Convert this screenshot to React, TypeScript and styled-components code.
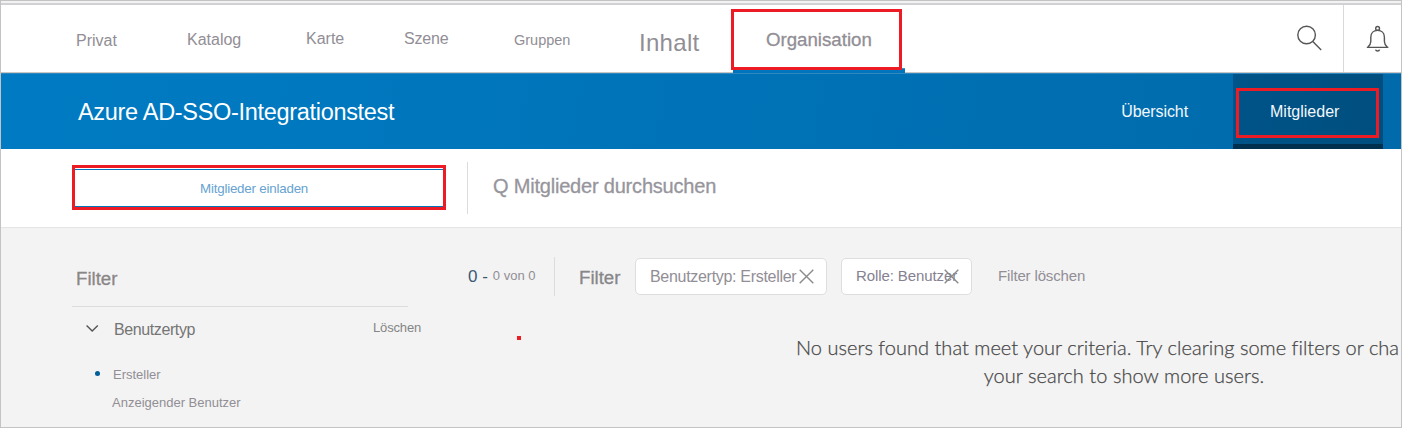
import React from "react";
import styled, { createGlobalStyle } from "styled-components";

const GlobalStyle = createGlobalStyle`
  * { box-sizing: border-box; }
  body { margin: 0; background: #fff; font-family: "Liberation Sans", Arial, sans-serif; }
`;

const RED = "#ed1c24";

const Frame = styled.div`
  width: 1402px;
  height: 428px;
  overflow: hidden;
  border: 1px solid #c3c3c3;
  background: #fff;
  display: flex;
  flex-direction: column;
`;

const TopStrip = styled.div`
  height: 4px;
  flex: none;
  background: #f3f2f3;
  border-bottom: 2px solid #d1d0d2;
`;

/* $baseline is the distance from the top of the container to the text baseline. */
const Label = styled.span<{
  $size: number;
  $baseline: number;
  $color?: string;
  $spacing?: number;
  $heavy?: number;
  $left?: number;
}>`
  display: block;
  flex: none;
  white-space: nowrap;
  line-height: 20px;
  font-size: ${(p) => p.$size}px;
  margin-top: ${(p) => p.$baseline - Math.floor(9.5 + 0.3465 * p.$size)}px;
  margin-left: ${(p) => p.$left ?? 0}px;
  color: ${(p) => p.$color ?? "#918e95"};
  letter-spacing: ${(p) => p.$spacing ?? 0}px;
  -webkit-text-stroke: ${(p) => p.$heavy ?? 0}px currentColor;
`;

const NavBar = styled.header`
  height: 68px;
  flex: none;
  display: flex;
  justify-content: space-between;
  border-bottom: 1px solid #c9c7c6;
`;

const Nav = styled.nav`
  display: grid;
  grid-template-columns: 111px 119px 98px 110px 125px 92px 174px;
  align-items: start;
  padding-left: 75px;
`;

const ActiveTab = styled.div`
  position: relative;
  height: 67px;
  padding-top: 4px;
  &::before {
    content: "";
    position: absolute;
    left: 2px;
    top: 63px;
    width: 172px;
    height: 4px;
    background: #0074bc;
    border-top: 1px solid #3d95cc;
  }
`;

const Highlight = styled.div<{ $w: number; $h: number }>`
  position: relative;
  display: flex;
  align-items: flex-start;
  width: ${(p) => p.$w}px;
  height: ${(p) => p.$h}px;
  border: 3px solid ${RED};
`;

const Tools = styled.div`
  display: flex;
`;

const SearchButton = styled.div`
  width: 60px;
  padding: 19px 0 0 10px;
  border-right: 1px solid #d9d9d9;
`;

const BellButton = styled.div`
  width: 57px;
  padding: 19px 0 0 21px;
`;

const Banner = styled.section`
  height: 76px;
  flex: none;
  display: flex;
  background: linear-gradient(100deg, #007ac2 0%, #0079c0 18%, #0071b5 60%, #006aaa 100%);
  border-top: 1px solid #3088bf;
`;

const BannerTabs = styled.div`
  display: flex;
  margin-left: auto;
  padding-right: 18px;
`;

const MembersTab = styled.div`
  width: 150px;
  margin-left: 45px;
  padding: 14px 0 0 3px;
  background: linear-gradient(100deg, #005489, #004e7e);
  border-bottom: 5px solid #00304e;
`;

const Toolbar = styled.section`
  height: 79px;
  flex: none;
  display: flex;
  align-items: flex-start;
  padding: 13px 0 0 71px;
  border-bottom: 1px solid #e5e5e5;
`;

const InviteFrame = styled.div`
  width: 374px;
  height: 45px;
  margin-top: 3px;
  padding-top: 1px;
  border: 3px solid ${RED};
`;

const InviteButton = styled.div`
  display: flex;
  align-items: flex-start;
  height: 38px;
  border-top: 1px solid #0074bc;
  border-bottom: 1px solid #0074bc;
`;

const SearchField = styled.div`
  display: flex;
  align-items: flex-start;
  height: 52px;
  margin-left: 21px;
  border-left: 1px solid #dcdcdc;
`;

const Content = styled.main`
  flex: 1;
  display: flex;
  background: #f3f3f3;
`;

const Sidebar = styled.aside`
  flex: none;
  width: 466px;
  padding-left: 71px;
`;

const SidebarHead = styled.div`
  display: flex;
  align-items: flex-start;
  width: 336px;
  height: 79px;
  border-bottom: 1px solid #dcdcdc;
`;

const GroupRow = styled.div`
  display: flex;
  align-items: flex-start;
  height: 50px;
`;

const Chevron = styled.svg`
  width: 14px;
  height: 9px;
  flex: none;
  margin: 17px 0 0 13px;
`;

const OptionRow = styled.div`
  display: flex;
  align-items: flex-start;
  height: 28px;
`;

const Bullet = styled.span`
  width: 5px;
  height: 5px;
  margin: 14px 0 0 23px;
  border-radius: 50%;
  background: #005e98;
`;

const Results = styled.div`
  flex: 1;
  min-width: 0;
`;

const FilterBar = styled.div`
  display: flex;
  align-items: flex-start;
  height: 105px;
`;

const Count = styled.div`
  display: flex;
  align-items: flex-start;
  width: 88px;
  height: 39px;
  margin-top: 29px;
  border-right: 1px solid #dcdcdc;
`;

const BarHeading = styled.div`
  width: 80px;
  display: flex;
`;

const Chip = styled.div<{ $w: number; $gap?: number }>`
  position: relative;
  display: flex;
  align-items: flex-start;
  flex: none;
  width: ${(p) => p.$w}px;
  height: 37px;
  margin: 30px 0 0 ${(p) => p.$gap ?? 0}px;
  background: #fff;
  border: 1px solid #dedede;
  border-radius: 5px;
`;

const ChipClose = styled.svg`
  position: absolute;
  right: 12px;
  top: 10px;
  width: 15px;
  height: 15px;
`;

const Marker = styled.span`
  position: absolute;
  left: 517px;
  top: 336px;
  width: 4px;
  height: 4px;
  background: ${RED};
`;

const EmptyMessage = styled.p`
  margin: 0 0 0 329px;
  width: 656px;
  white-space: nowrap;
  font-family: Lato, sans-serif;
  font-size: 20px;
  line-height: 28px;
  color: #484848;
`;

const Line = styled.span<{ $spacing: number; $centered?: boolean }>`
  display: block;
  letter-spacing: ${(p) => p.$spacing}px;
  text-align: ${(p) => (p.$centered ? "center" : "left")};
  font-weight: 300;
  -webkit-text-stroke: 0.25px currentColor;
`;

const CloseIcon = () => (
  <ChipClose viewBox="0 0 15 15" fill="none" stroke="#8a8a8a" strokeWidth="1.4">
    <path d="M.7.7l13.6 13.6M14.3.7L.7 14.3" />
  </ChipClose>
);

export default function App() {
  return (
    <Frame>
      <GlobalStyle />
      <TopStrip />
      <NavBar>
        <Nav>
          <Label $size={16} $baseline={41}>Privat</Label>
          <Label $size={16} $baseline={40}>Katalog</Label>
          <Label $size={16} $baseline={39}>Karte</Label>
          <Label $size={16} $baseline={39} $spacing={-0.2}>Szene</Label>
          <Label $size={14.5} $baseline={39}>Gruppen</Label>
          <Label $size={24} $baseline={45} $spacing={0.3}>Inhalt</Label>
          <ActiveTab>
            <Highlight $w={171} $h={61}>
              <Label $size={18.67} $baseline={33} $left={32} $heavy={0.3}>Organisation</Label>
            </Highlight>
          </ActiveTab>
        </Nav>
        <Tools>
          <SearchButton>
            <svg width="30" height="30" viewBox="0 0 30 30" fill="none" stroke="#555" strokeWidth="1.4">
              <circle cx="12.6" cy="11" r="8.8" />
              <path d="M18.8 17.4L27.2 26" />
            </svg>
          </SearchButton>
          <BellButton>
            <svg width="26" height="30" viewBox="0 0 26 30" fill="none" stroke="#555" strokeWidth="1.4">
              <circle cx="12.6" cy="4.4" r="1.9" />
              <path d="M1.8 23.4H23.4M2.8 23.2C5 21.4 5.8 20 5.8 17.6V13.2C5.8 9 8.6 6.4 12.6 6.4S19.4 9 19.4 13.2V17.6C19.4 20 20.2 21.4 22.4 23.2M10.6 25.6C11 27.4 14.2 27.4 14.6 25.6" />
            </svg>
          </BellButton>
        </Tools>
      </NavBar>
      <Banner>
        <Label $size={23.5} $baseline={45} $left={77} $color="#fff" $spacing={-0.31}>Azure AD-SSO-Integrationstest</Label>
        <BannerTabs>
          <Label $size={16} $baseline={43} $color="#f2f8fc" $spacing={-0.1}>Übersicht</Label>
          <MembersTab>
            <Highlight $w={143} $h={50}>
              <Label $size={16} $baseline={26} $left={31} $color="#f2f8fc">Mitglieder</Label>
            </Highlight>
          </MembersTab>
        </BannerTabs>
      </Banner>
      <Toolbar>
        <InviteFrame>
          <InviteButton>
            <Label $size={13.33} $baseline={23} $left={125} $color="#66a3d2" $spacing={-0.2}>Mitglieder einladen</Label>
          </InviteButton>
        </InviteFrame>
        <SearchField>
          <Label $size={20} $baseline={30} $left={25} $color="#97959c" $spacing={-0.2} $heavy={0.3}>Q Mitglieder durchsuchen</Label>
        </SearchField>
      </Toolbar>
      <Content>
        <Sidebar>
          <SidebarHead>
            <Label $size={18.67} $baseline={56} $left={4} $color="#8b8686" $heavy={0.3}>Filter</Label>
          </SidebarHead>
          <GroupRow>
            <Chevron viewBox="0 0 14 9" fill="none" stroke="#555" strokeWidth="1.4">
              <path d="M1.6 1.4L7.2 7L12.8 1.4" />
            </Chevron>
            <Label $size={16} $baseline={28} $left={15} $color="#757575" $spacing={-0.4}>Benutzertyp</Label>
            <Label $size={13} $baseline={25} $left={178} $color="#858585" $spacing={-0.15}>Löschen</Label>
          </GroupRow>
          <OptionRow>
            <Bullet />
            <Label $size={13} $baseline={22} $left={13}>Ersteller</Label>
          </OptionRow>
          <OptionRow>
            <Label $size={13} $baseline={22} $left={40}>Anzeigender Benutzer</Label>
          </OptionRow>
        </Sidebar>
        <Results>
          <FilterBar>
            <Count>
              <Label $size={17} $baseline={25} $left={1} $color="#3d5a73">0 -</Label>
              <Label $size={13} $baseline={23} $left={5}>0 von 0</Label>
            </Count>
            <BarHeading>
              <Label $size={18.67} $baseline={55} $left={24} $color="#87868a" $heavy={0.3}>Filter</Label>
            </BarHeading>
            <Chip $w={192}>
              <Label $size={16} $baseline={23} $left={14} $spacing={-0.3}>Benutzertyp: Ersteller</Label>
              <CloseIcon />
            </Chip>
            <Chip $w={131} $gap={14}>
              <Label $size={15} $baseline={21} $left={14} $spacing={-0.1} $color="#858191">Rolle: Benutzer</Label>
              <CloseIcon />
            </Chip>
            <Label $size={15} $baseline={52} $left={26} $spacing={-0.15}>Filter löschen</Label>
          </FilterBar>
          <EmptyMessage>
            <Line $spacing={0.02}>No users found that meet your criteria. Try clearing some filters or cha</Line>
            <Line $spacing={0.05} $centered>your search to show more users.</Line>
          </EmptyMessage>
        </Results>
      </Content>
      <Marker />
    </Frame>
  );
}
